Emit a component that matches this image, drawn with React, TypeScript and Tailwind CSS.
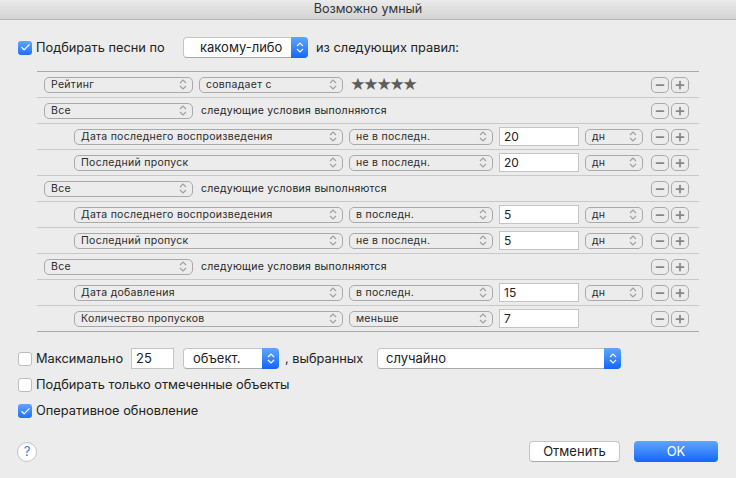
import { Check, Minus, Plus } from 'lucide-react'

const fontFamily = "font-['Inter','Liberation_Sans',sans-serif]"

function Chevrons({ className = '' }: { className?: string }) {
  return (
    <svg className={className} width="8" height="13" viewBox="0 0 8 13" fill="none" stroke="currentColor" strokeWidth="1.2">
      <path d="M1 5l3-3 3 3" />
      <path d="M1 8l3 3 3-3" />
    </svg>
  )
}

function SmallSelect({ label, className }: { label: string; className: string }) {
  return (
    <div className={`flex h-[16px] shrink-0 items-center justify-between rounded-[5px] border border-[#a9a9a9] pl-[6px] pr-[5px] text-[10.5px] tracking-[0.28px] text-[#2a2a2a] ${className}`}>
      <span>{label}</span>
      <Chevrons className="text-[#a0a0a0]" />
    </div>
  )
}

function BlueSelect({ label, className, textClass = '' }: { label: string; className: string; textClass?: string }) {
  return (
    <div className={`flex h-[21px] shrink-0 items-center rounded-[4px] border border-[#c4c4c4] border-b-[#a9a9a9] bg-white text-[13px] text-[#222] ${className}`}>
      <span className={`flex-1 ${textClass}`}>{label}</span>
      <div className="-my-px -mr-px flex h-[21px] w-[17px] items-center justify-center rounded-r-[4px] bg-gradient-to-b from-[#5ea5fb] to-[#1265fb] text-white">
        <Chevrons />
      </div>
    </div>
  )
}

function CheckBox({ checked = false }: { checked?: boolean }) {
  return checked ? (
    <div className="flex h-[14px] w-[14px] shrink-0 items-center justify-center rounded-[3px] bg-gradient-to-b from-[#5ea5fb] to-[#1f6ffb] text-white">
      <Check size={11} strokeWidth={2.5} />
    </div>
  ) : (
    <div className="h-[14px] w-[14px] shrink-0 rounded-[3px] border border-[#bdbdbd] bg-white" />
  )
}

function RowButtons() {
  return (
    <div className="ml-auto mr-[10px] flex shrink-0 gap-[2px] text-[#858585]">
      <div className="flex h-[16px] w-[18px] items-center justify-center rounded-[5px] border border-[#a9a9a9]">
        <Minus size={12} strokeWidth={3.5} />
      </div>
      <div className="flex h-[16px] w-[18px] items-center justify-center rounded-[5px] border border-[#a9a9a9]">
        <Plus size={12} strokeWidth={3.5} />
      </div>
    </div>
  )
}

function ValueInput({ value }: { value: string }) {
  return (
    <div className="ml-[6px] flex h-[19px] w-[80px] shrink-0 items-center border border-[#c4c4c4] bg-white pl-[4px] text-[12px] text-[#222]">
      {value}
    </div>
  )
}

function GroupRow() {
  return (
    <div className="flex h-[26px] items-center border-t border-[#c9c9c9] pl-[7px]">
      <SmallSelect label="Все" className="w-[149px]" />
      <span className="ml-[8px] text-[10.5px] tracking-[0.27px] text-[#1c1c1c]">следующие условия выполняются</span>
      <RowButtons />
    </div>
  )
}

function RuleRow({ field, op, value, unit = true }: { field: string; op: string; value: string; unit?: boolean }) {
  return (
    <div className="flex h-[26px] items-center border-t border-[#c9c9c9] pl-[37px]">
      <SmallSelect label={field} className="w-[269px]" />
      <SmallSelect label={op} className="ml-[6px] w-[144px]" />
      <ValueInput value={value} />
      {unit && <SmallSelect label="дн" className="ml-[6px] w-[58px]" />}
      <RowButtons />
    </div>
  )
}

export default function App() {
  return (
    <div className={`flex h-[478px] w-[736px] flex-col overflow-hidden bg-[#ececec] text-[#222] ${fontFamily}`}>
      <div className="flex h-[20px] shrink-0 items-center justify-center border-b border-[#b5b5b5] bg-gradient-to-b from-[#ebebeb] to-[#d3d3d3] text-[12.6px] text-[#333]">
        Возможно умный
      </div>

      <div className="mt-[17px] flex h-[21px] items-center pl-[18px] text-[12.8px]">
        <CheckBox checked />
        <span className="ml-[4px] w-[147px]">Подбирать песни по</span>
        <BlueSelect label="какому-либо" className="w-[125px]" textClass="pl-[16px]" />
        <span className="ml-[8px]">из следующих правил:</span>
      </div>

      <div className="ml-[37px] mt-[13px] w-[662px] border-b border-[#a9a9a9] [&>div:first-child]:border-[#a9a9a9]">
        <div className="flex h-[26px] items-center border-t border-[#c9c9c9] pl-[7px]">
          <SmallSelect label="Рейтинг" className="w-[149px]" />
          <SmallSelect label="совпадает с" className="ml-[6px] w-[144px]" />
          <span className="ml-[7px] text-[15px] leading-none tracking-[-2.6px] text-[#5c5c5c]">★★★★★</span>
          <RowButtons />
        </div>
        <GroupRow />
        <RuleRow field="Дата последнего воспроизведения" op="не в последн." value="20" />
        <RuleRow field="Последний пропуск" op="не в последн." value="20" />
        <GroupRow />
        <RuleRow field="Дата последнего воспроизведения" op="в последн." value="5" />
        <RuleRow field="Последний пропуск" op="не в последн." value="5" />
        <GroupRow />
        <RuleRow field="Дата добавления" op="в последн." value="15" />
        <RuleRow field="Количество пропусков" op="меньше" value="7" unit={false} />
      </div>

      <div className="mt-[16px] flex h-[21px] items-center pl-[18px] text-[12.8px]">
        <CheckBox />
        <span className="ml-[4px] w-[95px]">Максимально</span>
        <div className="flex h-[21px] w-[43px] items-center border border-[#c4c4c4] bg-white pl-[4px] text-[13px]">25</div>
        <BlueSelect label="объект." className="ml-[9px] w-[96px]" textClass="pl-[9px]" />
        <span className="ml-[6px] w-[92px]">, выбранных</span>
        <BlueSelect label="случайно" className="w-[244px]" textClass="pl-[8px]" />
      </div>

      <div className="mt-[9px] flex h-[14px] items-center pl-[18px] text-[12.8px]">
        <CheckBox />
        <span className="ml-[4px]">Подбирать только отмеченные объекты</span>
      </div>

      <div className="mt-[12px] flex h-[14px] items-center pl-[18px] text-[12.8px]">
        <CheckBox checked />
        <span className="ml-[4px]">Оперативное обновление</span>
      </div>

      <div className="mt-[23px] flex items-center pl-[17px] pr-[18px]">
        <div className="flex h-[20px] w-[20px] items-center justify-center rounded-full border border-[#c4c4c4] bg-white text-[13px] text-[#2a7bf6]">?</div>
        <div className="ml-auto flex h-[21px] w-[91px] items-center justify-center rounded-[4px] border border-[#c4c4c4] border-b-[#a9a9a9] bg-white text-[13px]">Отменить</div>
        <div className="ml-[14px] flex h-[21px] w-[84px] items-center justify-center rounded-[4px] bg-gradient-to-b from-[#5ea5fb] to-[#1265fb] text-[13px] text-white">OK</div>
      </div>
    </div>
  )
}
